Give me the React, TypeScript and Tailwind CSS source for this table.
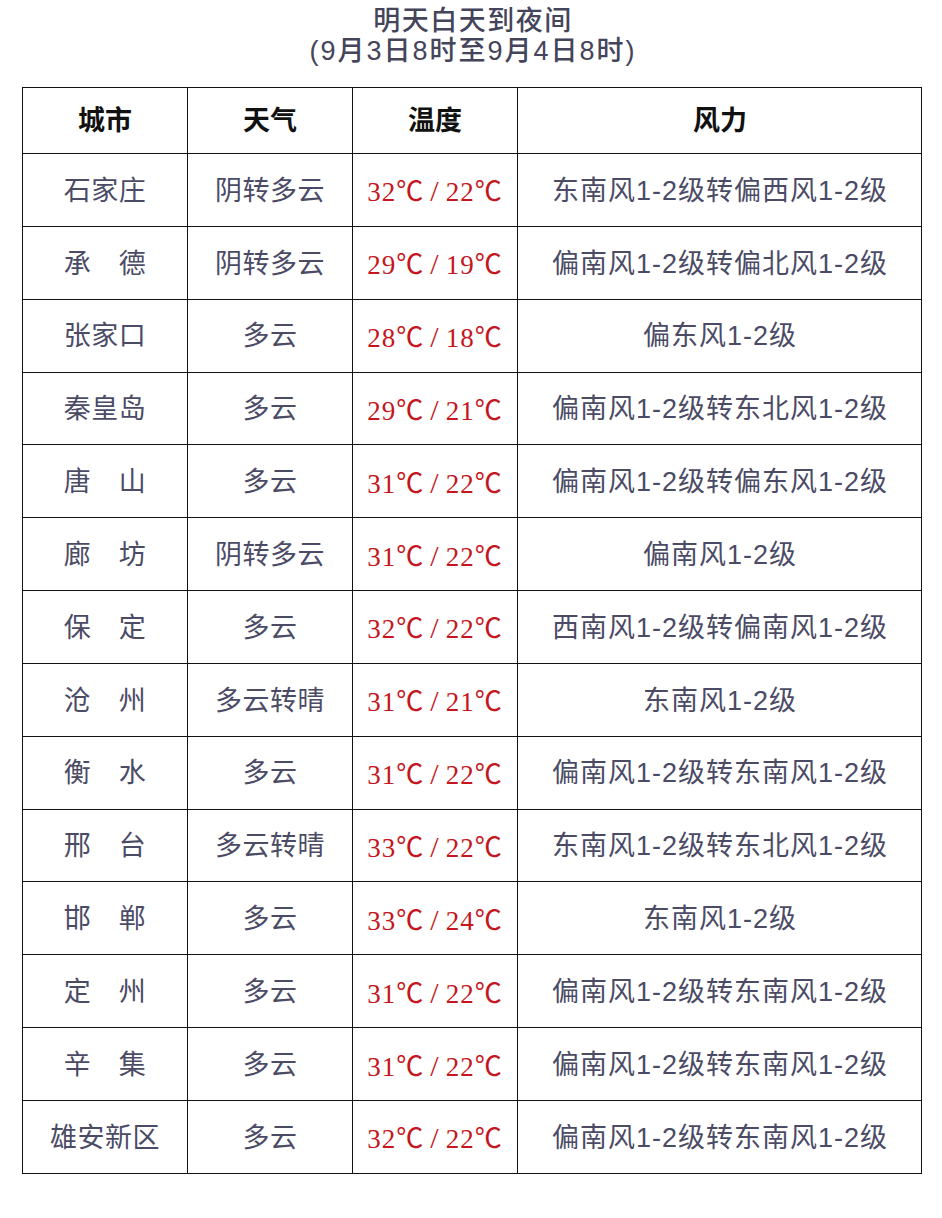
import React from 'react';

interface CityRow {
  city: string;
  weather: string;
  temp: [string, string];
  wind: string;
}

const rows: CityRow[] = [
  { city: '石家庄', weather: '阴转多云', temp: ['32', '22'], wind: '东南风1-2级转偏西风1-2级' },
  { city: '承　德', weather: '阴转多云', temp: ['29', '19'], wind: '偏南风1-2级转偏北风1-2级' },
  { city: '张家口', weather: '多云', temp: ['28', '18'], wind: '偏东风1-2级' },
  { city: '秦皇岛', weather: '多云', temp: ['29', '21'], wind: '偏南风1-2级转东北风1-2级' },
  { city: '唐　山', weather: '多云', temp: ['31', '22'], wind: '偏南风1-2级转偏东风1-2级' },
  { city: '廊　坊', weather: '阴转多云', temp: ['31', '22'], wind: '偏南风1-2级' },
  { city: '保　定', weather: '多云', temp: ['32', '22'], wind: '西南风1-2级转偏南风1-2级' },
  { city: '沧　州', weather: '多云转晴', temp: ['31', '21'], wind: '东南风1-2级' },
  { city: '衡　水', weather: '多云', temp: ['31', '22'], wind: '偏南风1-2级转东南风1-2级' },
  { city: '邢　台', weather: '多云转晴', temp: ['33', '22'], wind: '东南风1-2级转东北风1-2级' },
  { city: '邯　郸', weather: '多云', temp: ['33', '24'], wind: '东南风1-2级' },
  { city: '定　州', weather: '多云', temp: ['31', '22'], wind: '偏南风1-2级转东南风1-2级' },
  { city: '辛　集', weather: '多云', temp: ['31', '22'], wind: '偏南风1-2级转东南风1-2级' },
  { city: '雄安新区', weather: '多云', temp: ['32', '22'], wind: '偏南风1-2级转东南风1-2级' },
];

const cjk = "font-['Liberation_Sans','Noto_Sans_CJK_SC',sans-serif]";
const cell = 'flex items-center justify-center border-l-[1.5px] border-t-[1.5px] border-[#111]';

const Temp: React.FC<{ hi: string; lo: string }> = ({ hi, lo }) => (
  <span className="text-[27px] text-[#c4161c] font-['Liberation_Serif','Noto_Sans_CJK_SC',serif] tracking-[1px]">
    {hi}℃<span className="mx-[6px] text-[30px]">/</span>{lo}℃
  </span>
);

export default function App() {
  return (
    <div className={`w-[942px] h-[1218px] bg-white ${cjk}`}>
      <div className="pt-[6px] flex flex-col items-center text-[#44445a] text-[27px] leading-[30px] tracking-[1.5px] font-medium pl-[4px]">
        <div>明天白天到夜间</div>
        <div className="tracking-[2px]">(9月3日8时至9月4日8时)</div>
      </div>

      <div className="mt-[21px] ml-[22px] w-[900px] grid grid-cols-[165px_165px_165px_405px] border-r-[1.5px] border-b-[1.5px] border-[#111]">
        {['城市', '天气', '温度', '风力'].map((h) => (
          <div key={h} className={`${cell} h-[66px] text-[27px] font-semibold text-[#111] pt-[2px]`}>
            {h}
          </div>
        ))}
        {rows.map((r) => (
          <React.Fragment key={r.city}>
            <div className={`${cell} h-[72.85px] text-[27px] tracking-[0.5px] text-[#4b4b66] pt-[2px]`}>{r.city}</div>
            <div className={`${cell} h-[72.85px] text-[27px] tracking-[0.5px] text-[#4b4b66] pt-[2px]`}>{r.weather}</div>
            <div className={`${cell} h-[72.85px] pt-[2px]`}>
              <Temp hi={r.temp[0]} lo={r.temp[1]} />
            </div>
            <div className={`${cell} h-[72.85px] text-[27px] tracking-[1px] text-[#4b4b66] pt-[2px]`}>{r.wind}</div>
          </React.Fragment>
        ))}
      </div>
    </div>
  );
}
